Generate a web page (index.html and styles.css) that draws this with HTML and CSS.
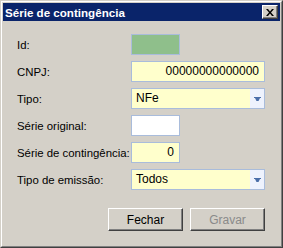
FILE: index.html
```html
<!DOCTYPE html>
<html>
<head>
<meta charset="utf-8">
<link rel="stylesheet" href="styles.css">
</head>
<body>
<div class="window">
  <div class="frame">
    <div class="titlebar">
      <span class="title">Série de contingência</span>
      <button class="close" type="button" aria-label="Fechar">
        <svg width="8" height="7" viewBox="0 0 8 7"><path d="M0 0h2l2 2.5L6 0h2L5 3.5 8 7H6L4 4.5 2 7H0l3-3.5z" fill="#000"/></svg>
      </button>
    </div>
    <div class="content">
      <div class="form">
        <span class="label">Id:</span>
        <div class="field short green"></div>
        <span class="label">CNPJ:</span>
        <div class="field long yellow right">00000000000000</div>
        <span class="label">Tipo:</span>
        <div class="field long yellow combo"><span class="value">NFe</span><span class="drop"><svg width="7" height="4" viewBox="0 0 7 4"><path d="M0 0h7v1H6L4.5 4h-2L1 1H0z" fill="#4a6ea8"/></svg></span></div>
        <span class="label">Série original:</span>
        <div class="field short white"></div>
        <span class="label">Série de contingência:</span>
        <div class="field short yellow right">0</div>
        <span class="label">Tipo de emissão:</span>
        <div class="field long yellow combo"><span class="value">Todos</span><span class="drop"><svg width="7" height="4" viewBox="0 0 7 4"><path d="M0 0h7v1H6L4.5 4h-2L1 1H0z" fill="#4a6ea8"/></svg></span></div>
      </div>
      <div class="buttons">
        <button class="btn" type="button">Fechar</button>
        <button class="btn" type="button" disabled>Gravar</button>
      </div>
    </div>
  </div>
</div>
</body>
</html>
```
FILE: styles.css
```css
html, body {
  margin: 0;
  padding: 0;
  background: #d4d0c8;
}
.window {
  width: 283px;
  height: 248px;
  box-sizing: border-box;
  border: 1px solid;
  border-color: #d4d0c8 #404040 #404040 #d4d0c8;
  background: #d4d0c8;
  font-family: "Liberation Sans", Arial, sans-serif;
  font-size: 11.4px;
  color: #000;
}
.frame {
  height: 100%;
  box-sizing: border-box;
  border: 1px solid;
  border-color: #fff #808080 #808080 #fff;
  padding: 1px;
  display: flex;
  flex-direction: column;
}
.titlebar {
  height: 18px;
  background: #0a246a;
  display: flex;
  align-items: center;
  justify-content: space-between;
  padding: 0 2px 0 2px;
}
.title {
  color: #fff;
  font-weight: bold;
  font-size: 11.6px;
  font-family: "Liberation Sans", Arial, sans-serif;
}
.close {
  width: 16px;
  height: 14px;
  padding: 0;
  margin: 0;
  box-sizing: border-box;
  background: #d4d0c8;
  border: 1px solid;
  border-color: #fff #404040 #404040 #fff;
  box-shadow: inset -1px -1px 0 #808080;
  display: flex;
  align-items: center;
  justify-content: center;
}
.close svg { display: block; margin-left: -1px; }
.content {
  flex: 1;
  padding: 13px 15px 0 14px;
  display: flex;
  flex-direction: column;
}
.form {
  display: grid;
  grid-template-columns: 114px 1fr;
  grid-auto-rows: 21px;
  row-gap: 6px;
  align-items: center;
}
.label {
  line-height: 14px;
  white-space: nowrap;
}
.field {
  height: 21px;
  box-sizing: border-box;
  border: 1px solid #a9bcdb;
  font-size: 12px;
  line-height: 19px;
  padding: 0 5px;
  white-space: nowrap;
}
.short { width: 49px; }
.long { width: 134px; }
.green { background: #8fbf8b; }
.yellow { background: #ffffcc; }
.white { background: #fff; }
.right { text-align: right; }
.combo {
  display: flex;
  padding: 0 0 0 4px;
}
.combo .value { flex: 1; }
.drop {
  width: 14px;
  background: #eef2fd;
  display: flex;
  align-items: center;
  justify-content: center;
}
.drop svg { display: block; }
.buttons {
  margin-top: 18px;
  display: flex;
  justify-content: flex-end;
  gap: 7px;
}
.btn {
  width: 75px;
  height: 23px;
  box-sizing: border-box;
  margin: 0;
  padding: 0;
  background: #d4d0c8;
  border: 1px solid;
  border-color: #fff #404040 #404040 #fff;
  box-shadow: inset -1px -1px 0 #808080;
  font-family: "Liberation Sans", Arial, sans-serif;
  font-size: 12px;
  color: #000;
}
.btn:disabled {
  color: #8a8a8a;
}
```
